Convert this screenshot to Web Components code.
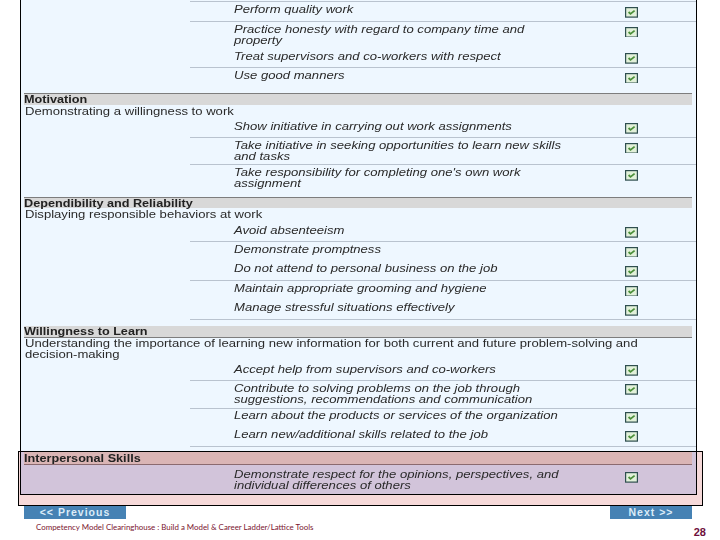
<!DOCTYPE html>
<html>
<head>
<meta charset="utf-8">
<title>Competency Model</title>
<style>
  html, body { margin: 0; background: #fff; }
  body { font-family: "Liberation Sans", Arial, sans-serif; }
</style>
</head>
<body>
<model-slide>
  <competency-panel>
    <check-row h="2" line></check-row>
    <check-row h="20" t="2" c="5" line checked>Perform quality work</check-row>
    <check-row h="25" t="2" c="5" cut checked>Practice honesty with regard to company time and<br>property</check-row>
    <check-row h="21" t="4" c="6" line checked>Treat supervisors and co-workers with respect</check-row>
    <check-row h="25" t="2" c="5" cut checked>Use good manners</check-row>

    <section-head h="12" top>Motivation</section-head>
    <section-text h="13" t="1">Demonstrating a willingness to work</section-text>
    <check-row h="20" t="3" c="5" line checked>Show initiative in carrying out work assignments</check-row>
    <check-row h="27" t="2" c="5" cut line checked>Take initiative in seeking opportunities to learn new skills<br>and tasks</check-row>
    <check-row h="32" t="2" c="5" checked>Take responsibility for completing one's own work<br>assignment</check-row>

    <section-head h="11" top>Dependibility and Reliability</section-head>
    <section-text h="12" t="1">Displaying responsible behaviors at work</section-text>
    <check-row h="22" t="5" c="7" line checked>Avoid absenteeism</check-row>
    <check-row h="19" t="2" c="5" cut checked>Demonstrate promptness</check-row>
    <check-row h="20" t="2" c="5" line checked>Do not attend to personal business on the job</check-row>
    <check-row h="19" t="2" c="5" cut checked>Maintain appropriate grooming and hygiene</check-row>
    <check-row h="20" t="2" c="5" line checked>Manage stressful situations effectively</check-row>
    <check-row h="6"></check-row>

    <section-head h="12" bottom>Willingness to Learn</section-head>
    <section-text h="24">Understanding the importance of learning new information for both current and future problem-solving and<br>decision-making</section-text>
    <check-row h="19" t="2" c="3" line checked>Accept help from supervisors and co-workers</check-row>
    <check-row h="28" t="2" c="3" line checked>Contribute to solving problems on the job through<br>suggestions, recommendations and communication</check-row>
    <check-row h="19" t="1" c="3" checked>Learn about the products or services of the organization</check-row>
    <check-row h="19" t="1" c="3" line checked>Learn new/additional skills related to the job</check-row>
    <check-row h="4"></check-row>

    <focus-section>
      <section-head h="13" bottom tone="rose">Interpersonal Skills</section-head>
      <check-row h="25" t="4" c="7" checked>Demonstrate respect for the opinions, perspectives, and<br>individual differences of others</check-row>
    </focus-section>
  </competency-panel>

  <slide-nav>
    <nav-button>&lt;&lt; Previous</nav-button>
    <nav-button wide="82">Next &gt;&gt;</nav-button>
  </slide-nav>

  <slide-footer page="28">Competency Model Clearinghouse : Build a Model &amp; Career Ladder/Lattice Tools</slide-footer>
</model-slide>

<script>
// keeps the define boilerplate in one spot
function shadow(el, html) {
  el.attachShadow({ mode: 'open' });
  el.shadowRoot.innerHTML = html;
}

class ModelSlide extends HTMLElement {
  constructor() {
    super();
    shadow(this, `
      <style>
        :host {
          display: block;
          position: relative;
          width: 720px;
          height: 540px;
          overflow: hidden;
          background: #fff;
        }
        #wash, #frame {
          position: absolute;
          left: 18px;
          top: 451px;
          width: 683px;
          height: 53px;
          border: 1.5px solid #000;
        }
        #wash { background: #f6d9d9; z-index: 0; }
        #frame { z-index: 2; }
        #content { position: relative; z-index: 1; }
      </style>
      <div id="wash"></div>
      <div id="content"><slot></slot></div>
      <div id="frame"></div>
    `);
  }
}

class CompetencyPanel extends HTMLElement {
  constructor() {
    super();
    shadow(this, `
      <style>
        :host {
          display: block;
          box-sizing: border-box;
          margin-left: 20px;
          width: 677px;
          height: 495px;
          overflow: hidden;
          background: #eef7ff;
          border: solid #000;
          border-width: 0 1.5px 1.5px 1.5px;
        }
      </style>
      <slot></slot>
    `);
  }
}

class CheckRow extends HTMLElement {
  constructor() {
    super();
    let h = this.getAttribute('h') || 20;
    let t = this.getAttribute('t') || 0;
    let c = this.getAttribute('c') || 0;
    // some boxes lose their bottom edge in the reference
    let bh = this.hasAttribute('cut') ? 9.5 : 10.5;
    let box = this.hasAttribute('checked') ? `
      <svg id="box" width="13" height="${bh}" viewBox="0 0 13 ${bh}">
        <rect x=".6" y=".6" width="11.8" height="9.5" fill="#e2f1da" stroke="#2f4f4f" stroke-width="1.2"/>
        <path d="M3.6 5 5.5 6.9 9.6 3.6" fill="none" stroke="#4b8f3a" stroke-width="1.8"/>
      </svg>` : '';
    shadow(this, `
      <style>
        :host {
          display: block;
          box-sizing: border-box;
          height: ${h}px;
          margin-left: 169px;
          overflow: hidden;
          border-bottom: 1px solid transparent;
        }
        :host([line]) { border-bottom-color: #b9c3cf; }
        #cols {
          display: grid;
          grid-template-columns: 390.5px 13px;
          padding-left: 44px;
          align-items: start;
        }
        #txt {
          padding-top: ${t}px;
          font: italic 11px/11px "Liberation Sans", Arial, sans-serif;
          color: #2a2a2a;
          white-space: nowrap;
        }
        #wide {
          display: inline-block;
          transform: scaleX(1.19);
          transform-origin: left top;
          filter: blur(.3px);
        }
        #box { display: block; margin-top: ${c}px; }
      </style>
      <div id="cols"><div id="txt"><span id="wide"><slot></slot></span></div>${box}</div>
    `);
  }
}

class SectionHead extends HTMLElement {
  constructor() {
    super();
    let h = this.getAttribute('h') || 12;
    shadow(this, `
      <style>
        :host {
          display: block;
          box-sizing: border-box;
          height: ${h}px;
          margin: 0 4px 0 2.5px;
          background: #d8d8d8;
          font: bold 11px/10px "Liberation Sans", Arial, sans-serif;
          color: #222;
          white-space: nowrap;
        }
        :host([top]) { border-top: 1px solid #7d7d7d; }
        :host([bottom]) { border-bottom: 1px solid #7d7d7d; }
        :host([tone="rose"]) { background: #dab5b5; border-bottom-color: #8b6a6f; padding-top: 1px; }
        span {
          display: inline-block;
          transform: scaleX(1.15);
          transform-origin: left top;
          filter: blur(.25px);
        }
      </style>
      <span><slot></slot></span>
    `);
  }
}

class SectionText extends HTMLElement {
  constructor() {
    super();
    let h = this.getAttribute('h') || 12;
    let t = this.getAttribute('t') || 0;
    shadow(this, `
      <style>
        :host {
          display: block;
          box-sizing: border-box;
          height: ${h}px;
          margin-left: 3.5px;
          padding-top: ${t}px;
          font: 11px/11px "Liberation Sans", Arial, sans-serif;
          color: #2a2a2a;
          white-space: nowrap;
        }
        span {
          display: inline-block;
          transform: scaleX(1.19);
          transform-origin: left top;
          filter: blur(.3px);
        }
      </style>
      <span><slot></slot></span>
    `);
  }
}

class FocusSection extends HTMLElement {
  constructor() {
    super();
    shadow(this, `
      <style>
        :host {
          display: block;
          box-sizing: border-box;
          padding-top: 1px;
          height: 44px;
          background: #d2c4da;
        }
      </style>
      <slot></slot>
    `);
  }
}

class SlideNav extends HTMLElement {
  constructor() {
    super();
    shadow(this, `
      <style>
        :host {
          display: flex;
          justify-content: space-between;
          margin: 11px 28px 0 24px;
        }
      </style>
      <slot></slot>
    `);
  }
}

class NavButton extends HTMLElement {
  constructor() {
    super();
    let w = this.getAttribute('wide') || 102;
    shadow(this, `
      <style>
        :host {
          display: block;
          width: ${w}px;
          height: 13px;
          background: #4682b4;
          color: #dcecf8;
          font: bold 10.5px/13px "Liberation Sans", Arial, sans-serif;
          letter-spacing: 1px;
          text-align: center;
          white-space: nowrap;
        }
      </style>
      <slot></slot>
    `);
  }
}

class SlideFooter extends HTMLElement {
  constructor() {
    super();
    shadow(this, `
      <style>
        :host {
          display: flex;
          justify-content: space-between;
          margin: 2px 14px 0 36px;
          align-items: flex-start;
          white-space: nowrap;
        }
        #note {
          font: 7.9px/12px Lato, "Liberation Sans", sans-serif;
          color: #7b1530;
        }
        #page {
          margin-top: 5px;
          font: bold 11px/12px "Liberation Sans", Arial, sans-serif;
          color: #6e0f3c;
        }
      </style>
      <span id="note"><slot></slot></span>
      <span id="page">${this.getAttribute('page')}</span>
    `);
  }
}

customElements.define('model-slide', ModelSlide);
customElements.define('competency-panel', CompetencyPanel);
customElements.define('check-row', CheckRow);
customElements.define('section-head', SectionHead);
customElements.define('section-text', SectionText);
customElements.define('focus-section', FocusSection);
customElements.define('slide-nav', SlideNav);
customElements.define('nav-button', NavButton);
customElements.define('slide-footer', SlideFooter);
</script>
</body>
</html>
